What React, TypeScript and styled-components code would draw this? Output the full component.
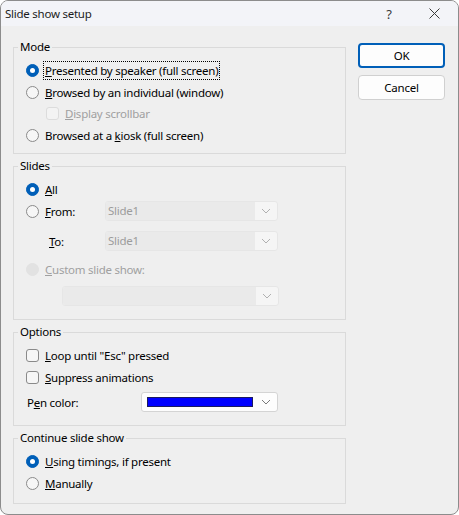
import styled, { createGlobalStyle } from "styled-components";

const GlobalStyle = createGlobalStyle`
    html, body {
        margin: 0;
        padding: 0;
        background: #ffffff;
    }
`;

const FONT = `"Noto Sans", "Open Sans", sans-serif`;

const Chevron = ({ color = "#7a7a7a" }: { color?: string }) => (
    <svg width="10" height="6" viewBox="0 0 10 6">
        <path d="M1 1 L5 5 L9 1" fill="none" stroke={color} strokeWidth="1" />
    </svg>
);

const Radio = ({ checked, disabled }: { checked?: boolean; disabled?: boolean }) => (
    <RadioDot $checked={checked} $disabled={disabled} />
);

const App = () => {
    return (
        <>
            <GlobalStyle />
            <Window>
                <TitleBar>
                    <Title>Slide show setup</Title>
                    <Help>?</Help>
                    <Close>
                        <svg width="11" height="11" viewBox="0 0 11 11">
                            <path d="M0.5 0.5 L10.5 10.5 M10.5 0.5 L0.5 10.5" stroke="#3a3a3a" strokeWidth="1" />
                        </svg>
                    </Close>
                </TitleBar>
                <Body>
                    <Groups>
                        <Group $pb={7}>
                            <Legend>Mode</Legend>
                            <Row>
                                <Radio checked />
                                <Focus>
                                    <u>P</u>resented by speaker (full screen)
                                </Focus>
                            </Row>
                            <Row>
                                <Radio />
                                <Label>
                                    <u>B</u>rowsed by an individual (window)
                                </Label>
                            </Row>
                            <Row $h={21} $indent={20}>
                                <Check $disabled />
                                <Label $disabled>
                                    <u>D</u>isplay scrollbar
                                </Label>
                            </Row>
                            <Row>
                                <Radio />
                                <Label>
                                    Browsed at a <u>k</u>iosk (full screen)
                                </Label>
                            </Row>
                        </Group>

                        <Group $pb={12}>
                            <Legend>Slides</Legend>
                            <Row>
                                <Radio checked />
                                <Label>
                                    <u>A</u>ll
                                </Label>
                            </Row>
                            <Row>
                                <Radio />
                                <FieldLabel $width={60}>
                                    <u>F</u>rom:
                                </FieldLabel>
                                <Combo $width={173} $disabled>
                                    <ComboText>Slide1</ComboText>
                                    <ComboArrow>
                                        <Chevron color="#b0b0b0" />
                                    </ComboArrow>
                                </Combo>
                            </Row>
                            <Row $mt={8}>
                                <FieldLabel $width={79} $indent={23}>
                                    <u>T</u>o:
                                </FieldLabel>
                                <Combo $width={173} $disabled>
                                    <ComboText>Slide1</ComboText>
                                    <ComboArrow>
                                        <Chevron color="#b0b0b0" />
                                    </ComboArrow>
                                </Combo>
                            </Row>
                            <Row $mt={6}>
                                <Radio disabled />
                                <Label $disabled>
                                    <u>C</u>ustom slide show:
                                </Label>
                            </Row>
                            <Row $indent={36} $mt={5}>
                                <Combo $width={217} $disabled>
                                    <ComboText />
                                    <ComboArrow>
                                        <Chevron color="#b0b0b0" />
                                    </ComboArrow>
                                </Combo>
                            </Row>
                        </Group>

                        <Group $pb={12}>
                            <Legend>Options</Legend>
                            <Row>
                                <Check />
                                <Label>
                                    <u>L</u>oop until "Esc" pressed
                                </Label>
                            </Row>
                            <Row>
                                <Check />
                                <Label>
                                    <u>S</u>uppress animations
                                </Label>
                            </Row>
                            <Row $mt={3}>
                                <FieldLabel $width={115} $indent={1}>
                                    P<u>e</u>n color:
                                </FieldLabel>
                                <Combo $width={137}>
                                    <Swatch />
                                    <ComboArrow>
                                        <Chevron />
                                    </ComboArrow>
                                </Combo>
                            </Row>
                        </Group>

                        <Group $pb={9}>
                            <Legend>Continue slide show</Legend>
                            <Row>
                                <Radio checked />
                                <Label>
                                    <u>U</u>sing timings, if present
                                </Label>
                            </Row>
                            <Row>
                                <Radio />
                                <Label>
                                    <u>M</u>anually
                                </Label>
                            </Row>
                        </Group>
                    </Groups>

                    <Buttons>
                        <Button $primary>OK</Button>
                        <Button>Cancel</Button>
                    </Buttons>
                </Body>
            </Window>
        </>
    );
};

const Window = styled.div`
    box-sizing: border-box;
    width: 459px;
    height: 515px;
    border: 1px solid #8c8c8c;
    border-radius: 8px;
    overflow: hidden;
    background: #efefef;
    display: flex;
    flex-direction: column;
    font-family: ${FONT};
    font-size: 11.5px;
    letter-spacing: -0.25px;
    color: #000;
`;

const TitleBar = styled.div`
    height: 25px;
    flex: none;
    display: flex;
    align-items: center;
    background: #f3f4f8;
    padding-left: 4px;
`;

const Title = styled.div`
    flex: 1;
    color: #1c1c1c;
`;

const Help = styled.div`
    width: 14px;
    text-align: center;
    color: #3a3a3a;
    font-size: 13px;
    margin-right: 33px;
`;

const Close = styled.div`
    display: flex;
    align-items: center;
    margin-right: 18px;
`;

const Body = styled.div`
    flex: 1;
    display: flex;
    gap: 12px;
    padding: 13px 13px 0 12px;
`;

const Groups = styled.div`
    width: 333px;
    display: flex;
    flex-direction: column;
    gap: 4px;
`;

const Group = styled.fieldset<{ $pb: number }>`
    margin: 0;
    padding: 4px 0 ${(p) => p.$pb}px 0;
    border: 1px solid #dadada;
    min-width: 0;
`;

const Legend = styled.legend`
    margin-left: 4px;
    padding: 0 2px;
    line-height: 16px;
    height: 16px;
`;

const Row = styled.div<{ $h?: number; $indent?: number; $mt?: number }>`
    height: ${(p) => p.$h ?? 22}px;
    display: flex;
    align-items: center;
    padding-left: ${(p) => 12 + (p.$indent ?? 0)}px;
    margin-top: ${(p) => p.$mt ?? 0}px;
`;

const RadioDot = styled.span<{ $checked?: boolean; $disabled?: boolean }>`
    box-sizing: border-box;
    flex: none;
    width: 13px;
    height: 13px;
    border-radius: 50%;
    margin-right: 6px;
    position: relative;
    border: 1px solid ${(p) => (p.$checked ? "#005fb8" : p.$disabled ? "#e2e2e2" : "#8a8a8a")};
    background: ${(p) => (p.$checked ? "#005fb8" : p.$disabled ? "#e2e2e2" : "#f6f6f6")};
    &::after {
        content: "";
        display: ${(p) => (p.$checked ? "block" : "none")};
        position: absolute;
        left: 3px;
        top: 3px;
        width: 5px;
        height: 5px;
        border-radius: 50%;
        background: #ffffff;
    }
`;

const Check = styled.span<{ $disabled?: boolean }>`
    box-sizing: border-box;
    flex: none;
    width: 13px;
    height: 13px;
    border-radius: 3px;
    margin-right: 6px;
    border: 1px solid ${(p) => (p.$disabled ? "#dcdcdc" : "#8a8a8a")};
    background: ${(p) => (p.$disabled ? "#f3f3f3" : "#f6f6f6")};
`;

const Label = styled.span<{ $disabled?: boolean }>`
    white-space: nowrap;
    color: ${(p) => (p.$disabled ? "#a0a0a0" : "#000")};
`;

const Focus = styled.span`
    white-space: nowrap;
    outline: 1px dotted #000;
    outline-offset: 1px;
`;

const FieldLabel = styled.span<{ $width: number; $indent?: number }>`
    box-sizing: border-box;
    width: ${(p) => p.$width}px;
    padding-left: ${(p) => p.$indent ?? 0}px;
    flex: none;
    white-space: nowrap;
`;

const Combo = styled.div<{ $width: number; $disabled?: boolean }>`
    box-sizing: border-box;
    width: ${(p) => p.$width}px;
    height: 20px;
    display: flex;
    align-items: stretch;
    border: 1px solid ${(p) => (p.$disabled ? "#e6e6e6" : "#d4d4d4")};
    border-radius: 3px;
    background: ${(p) => (p.$disabled ? "#f5f5f5" : "#fdfdfd")};
    overflow: hidden;
`;

const ComboText = styled.div`
    flex: 1;
    background: #eaeaea;
    color: #9c9c9c;
    padding-left: 2px;
    line-height: 18px;
`;

const ComboArrow = styled.div`
    width: 22px;
    flex: none;
    display: flex;
    align-items: center;
    justify-content: center;
`;

const Swatch = styled.div`
    flex: 1;
    margin: 4px 2px 4px 5px;
    background: #0000ff;
    border: 1px solid #1a1a60;
`;

const Buttons = styled.div`
    width: 87px;
    display: flex;
    flex-direction: column;
    gap: 7px;
    padding-top: 4px;
`;

const Button = styled.button<{ $primary?: boolean }>`
    box-sizing: border-box;
    height: 25px;
    width: 87px;
    border-radius: 4px;
    font-family: ${FONT};
    font-size: 11.5px;
    letter-spacing: -0.25px;
    color: #000;
    background: #fdfdfd;
    border: ${(p) => (p.$primary ? "2px solid #005fb8" : "1px solid #d0d0d0")};
    padding: 0;
`;

export default App;
